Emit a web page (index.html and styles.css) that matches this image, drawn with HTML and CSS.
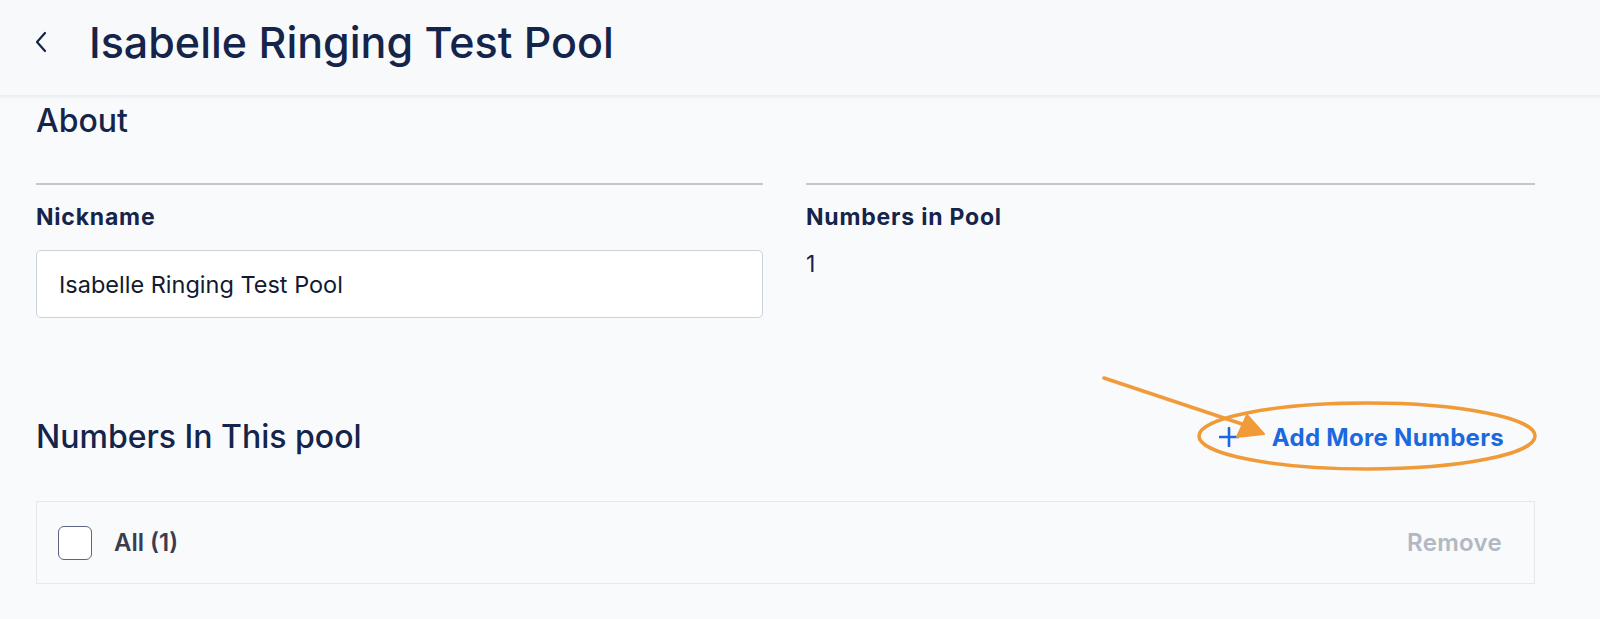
FILE: index.html
```html
<!DOCTYPE html>
<html>
<head>
<meta charset="utf-8">
<link rel="stylesheet" href="styles.css">
</head>
<body>
<header class="topbar">
  <span class="back">
    <svg width="14" height="22" viewBox="0 0 14 22"><path d="M11 2 L3 11 L11 20" fill="none" stroke="#15244a" stroke-width="2.2" stroke-linecap="round" stroke-linejoin="round"/></svg>
  </span>
  <h1 class="title">Isabelle Ringing Test Pool</h1>
</header>
<main class="content">
  <h2 class="section-title">About</h2>
  <div class="about-grid">
    <div class="field">
      <div class="rule"></div>
      <div class="label">Nickname</div>
      <div class="input">Isabelle Ringing Test Pool</div>
    </div>
    <div class="field">
      <div class="rule"></div>
      <div class="label">Numbers in Pool</div>
      <div class="value">1</div>
    </div>
  </div>
  <div class="pool-head">
    <h2 class="pool-title">Numbers In This pool</h2>
    <a class="add-btn"><span class="plus">
      <svg width="20" height="20" viewBox="0 0 20 20"><path d="M10 1 V19 M1 10 H19" stroke="#1c68e0" stroke-width="2.6" stroke-linecap="round"/></svg>
    </span>Add More Numbers</a>
  </div>
  <div class="table-bar">
    <div class="select-all"><span class="checkbox"></span><span class="all-label">All (1)</span></div>
    <span class="remove">Remove</span>
  </div>
</main>
<svg class="annotation" width="1600" height="619" viewBox="0 0 1600 619">
  <ellipse cx="1367" cy="436" rx="168" ry="33" fill="none" stroke="#f09a38" stroke-width="3.6"/>
  <path d="M1104 378 L1242 424" stroke="#f09a38" stroke-width="3.6" fill="none" stroke-linecap="round"/>
  <path d="M1264 434 L1247 415 L1237 437 Z" fill="#f09a38" stroke="#f09a38" stroke-width="2" stroke-linejoin="round"/>
</svg>
</body>
</html>
```
FILE: styles.css
```css
* { box-sizing: border-box; }
html, body { margin: 0; padding: 0; }
body {
  background: #f9fafc;
  font-family: Inter, "Noto Sans", sans-serif;
  color: #15244a;
  width: 1600px;
  height: 619px;
  overflow: hidden;
  position: relative;
}
.topbar {
  height: 96px;
  background: #f8f9fb;
  display: flex;
  align-items: center;
  padding-left: 34px;
  padding-bottom: 12px;
  box-shadow: 0 1px 3px rgba(20, 30, 60, 0.08);
  border-bottom: 1px solid #eceef2;
}
.back { display: flex; width: 55px; align-items: center; }
.title {
  margin: 0;
  font-size: 43px;
  line-height: 52px;
  font-weight: 500;
  color: #15244a;
}
.content { padding: 0 65px 0 36px; }
.section-title {
  margin: 5px 0 0;
  font-size: 32px;
  font-weight: 500;
  line-height: 40px;
}
.about-grid {
  display: grid;
  grid-template-columns: 727px 729px;
  column-gap: 43px;
  margin-top: 42px;
}
.rule { height: 2px; background: #c3c8cf; }
.label {
  margin-top: 17px;
  font-size: 23px;
  font-weight: 700;
  line-height: 30px;
  letter-spacing: 0.8px;
}
.input {
  margin-top: 18px;
  height: 68px;
  border: 1px solid #ccd1d8;
  border-radius: 5px;
  background: #fff;
  display: flex;
  align-items: center;
  padding-left: 22px;
  font-size: 23.5px;
  color: #111a2e;
}
.value { margin-top: 17px; font-size: 23px; line-height: 30px; }
.pool-head {
  display: flex;
  justify-content: space-between;
  align-items: center;
  margin-top: 97px;
  height: 44px;
}
.pool-title { margin: 0; font-size: 32px; font-weight: 500; line-height: 44px; }
.add-btn {
  display: flex;
  align-items: center;
  color: #1c68e0;
  font-size: 24px;
  font-weight: 700;
  margin-right: 31px;
  letter-spacing: 0.3px;
}
.plus { display: flex; margin-right: 33px; }
.table-bar {
  margin-top: 42px;
  height: 83px;
  border: 1px solid #e6e8ec;
  background: #f9fafc;
  display: flex;
  align-items: center;
  justify-content: space-between;
  padding: 0 32px 0 21px;
}
.select-all { display: flex; align-items: center; }
.checkbox {
  width: 34px;
  height: 34px;
  border: 1.5px solid #5a6683;
  border-radius: 6px;
  background: #fff;
  margin-right: 22px;
}
.all-label { font-size: 24px; font-weight: 600; color: #3a3d4e; }
.remove { font-size: 24px; font-weight: 600; color: #b1b8c4; letter-spacing: 0.3px; }
.annotation { position: absolute; left: 0; top: 0; pointer-events: none; }
```
